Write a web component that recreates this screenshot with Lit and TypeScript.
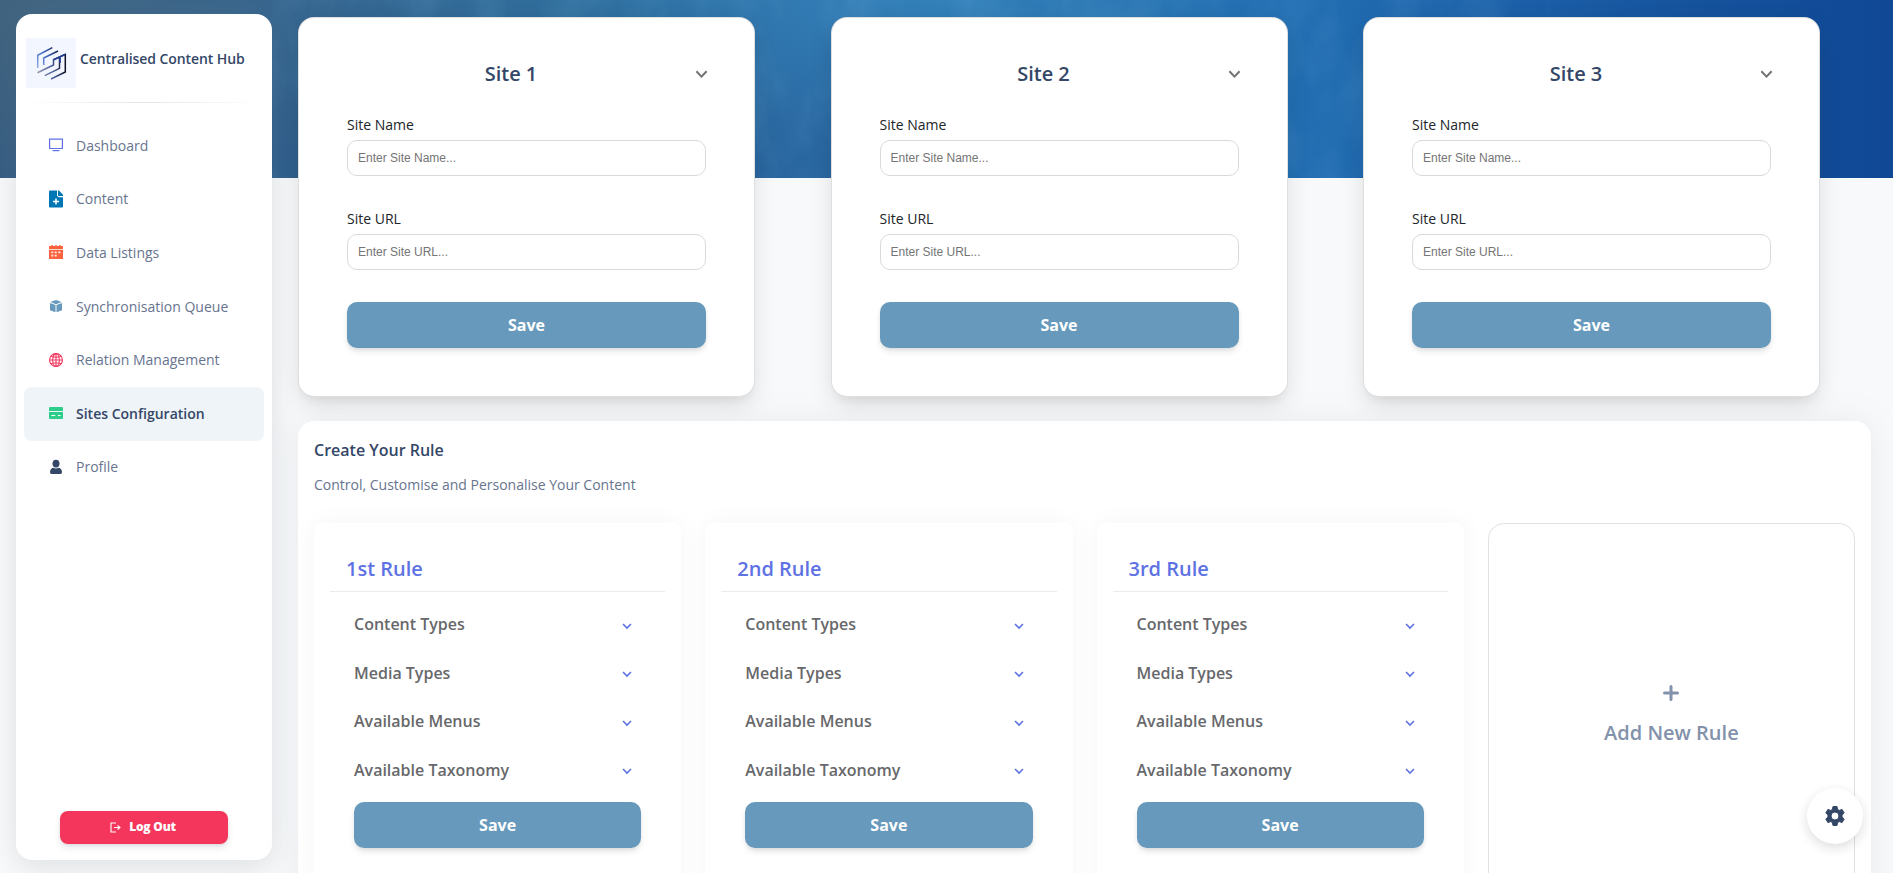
import { LitElement, html, css, svg } from "lit";
import { customElement, property } from "lit/decorators.js";

const chevron = html`<svg class="chev" viewBox="0 0 12 8"><path d="M1.2 1.2 6 6.2 10.8 1.2" fill="none" stroke="currentColor" stroke-width="1.9"/></svg>`;

const saveStyles = css`
  .save {
    display: flex; align-items: center; justify-content: center;
    width: 100%; height: 46px; border: 0; border-radius: 10px; padding: 0;
    background: #6699bb; color: #fff;
    font: 700 16px/24px "Open Sans", sans-serif;
    box-shadow: 0 4px 7px -1px rgba(0, 0, 0, .11), 0 2px 4px -1px rgba(0, 0, 0, .07);
  }
`;

@customElement("site-card")
class SiteCard extends LitElement {
  @property() heading = "";
  static styles = [saveStyles, css`
    :host {
      display: block; box-sizing: border-box; width: 457px; height: 380px;
      padding: 38px 48px 0; background: #fff;
      border: 1px solid rgba(0, 0, 0, .125); border-radius: 16px;
      box-shadow: 0 8px 26px -4px rgba(20, 20, 20, .15), 0 8px 9px -5px rgba(20, 20, 20, .06);
      font-family: "Open Sans", sans-serif;
    }
    .head { display: flex; align-items: center; height: 34px; gap: 20px; margin-right: -2px; }
    .title { flex: 1; text-align: center; font-size: 20px; font-weight: 600; color: #344767; }
    .chev { width: 13px; height: 8.5px; color: #737373; margin-top: 1.5px; }
    .label { display: block; font-size: 14px; line-height: 21px; color: #212529; margin-bottom: 5px; }
    .name { margin-top: 24px; }
    .url { margin-top: 32px; }
    input {
      display: block; box-sizing: border-box; width: 100%; height: 36px; padding: 0 10px;
      border: 1px solid #dadada; border-radius: 10px; background: #fff;
      font: 12px "Liberation Sans", sans-serif;
    }
    input::placeholder { color: #757575; }
    .save { margin-top: 32px; }
  `];
  render() {
    return html`
      <div class="head"><div class="title">${this.heading}</div>${chevron}</div>
      <label class="name label">Site Name</label><input placeholder="Enter Site Name..." />
      <label class="url label">Site URL</label><input placeholder="Enter Site URL..." />
      <button class="save">Save</button>`;
  }
}

@customElement("rule-card")
class RuleCard extends LitElement {
  @property() heading = "";
  static styles = [saveStyles, css`
    :host {
      display: block; box-sizing: border-box; height: 420px; padding: 0 16px;
      border-radius: 8px; background: #fff;
      box-shadow: 0 0 24px rgba(0, 0, 0, .045);
      font-family: "Open Sans", sans-serif;
    }
    .head {
      box-sizing: border-box; height: 69px; padding: 31px 16px 0; border-bottom: 1px solid #e9ecef;
      font-size: 20px; line-height: 30px; font-weight: 600; color: #5e72e4;
    }
    .list { padding: 8px 24px 0; }
    .row {
      display: flex; justify-content: space-between; align-items: center; height: 48.5px;
      padding-right: 9px; font-size: 16px; font-weight: 600; color: #67686b;
    }
    .chev { width: 10px; height: 6.6px; color: #5e72e4; margin-top: 4px; }
    .save { margin-top: 8px; }
  `];
  render() {
    return html`<div class="head">${this.heading}</div>
      <div class="list">
        ${["Content Types", "Media Types", "Available Menus", "Available Taxonomy"].map(
          (t) => html`<div class="row"><span>${t}</span>${chevron}</div>`)}
        <button class="save">Save</button>
      </div>`;
  }
}

const nav = [
  { label: "Dashboard", color: "#5e72e4", icon: svg`<path d="M.6 1.1h12.800v9.400H.6z" fill="none" stroke="currentColor" stroke-width="1.2"/><path d="M3.500 12.600h7" stroke="currentColor" stroke-width="1.2"/>` },
  { label: "Content", color: "#0077b5", icon: svg`<path d="M1-1.500h7v4.300c0 1.500.8 2.400 2.400 2.400H14v9.300a1 1 0 0 1-1 1H1a1 1 0 0 1-1-1V-.5a1 1 0 0 1 1-1z" fill="currentColor"/><path d="M9-1.500h1L14 2.800v1.300h-3.800C9.400 4.100 9 3.700 9 2.900z" fill="currentColor"/><path d="M7 6.500v6M4 9.500h6" stroke="#fff" stroke-width="1.500"/>` },
  { label: "Data Listings", color: "#fb6340", icon: svg`<path d="M0 1h2.500V0H4v1h2.300V0h1.400v1H10V0h1.500v1H14v3.300H0zM0 5h14v9H0z" fill="currentColor"/><path d="M2.300 6.600h2v1.700h-2zM5.700 6.600h2v1.700h-2zM9.200 6.600h2.300v1.700H9.200zM2.300 9.700h2v1.700h-2zM5.700 9.700h2v1.700h-2z" fill="#fff" opacity=".85"/>` },
  { label: "Synchronisation Queue", color: "#6699bb", icon: svg`<path d="M7 1 12.600 3 7 5.200 1.400 3zM1 4l5.500 2v7.300L1 11.200zM13 4 7.500 6v7.300L13 11.200z" fill="currentColor"/>` },
  { label: "Relation Management", color: "#f5365c", icon: svg`<g fill="none" stroke="currentColor" stroke-width="1.1"><circle cx="7" cy="7" r="6.400"/><ellipse cx="7" cy="7" rx="3.300" ry="6.400"/><path d="M.6 7h12.800M7 .6v12.800M2 3.300q5 2 10 0M2 10.700q5-2 10 0"/></g>` },
  { label: "Sites Configuration", color: "#2dce89", icon: svg`<path d="M1 1h12a1 1 0 0 1 1 1v3H0V2a1 1 0 0 1 1-1zM0 6h14v6a1 1 0 0 1-1 1H1a1 1 0 0 1-1-1z" fill="currentColor"/><path d="M2.300 9.500h4M9 9.500h2.500" stroke="#fff" stroke-width="1"/>`, active: true },
  { label: "Profile", color: "#344767", icon: svg`<ellipse cx="7" cy="3.600" rx="3.500" ry="3.900" fill="currentColor"/><path d="M1 12.200C1 9.700 2.400 8 4.300 7.700Q7 9.300 9.700 7.700C11.600 8 13 9.700 13 12.200Q13 14 11.500 14h-9Q1 14 1 12.200z" fill="currentColor"/>` },
];

@customElement("app-root")
class AppRoot extends LitElement {
  static styles = css`
    :host {
      display: block; position: relative; height: 873px; overflow: hidden;
      background: #f8f9fa; font-family: "Open Sans", sans-serif;
    }
    .banner { position: absolute; left: 0; top: 0; width: 100%; height: 178px; }
    .layout { position: relative; display: grid; grid-template-columns: 256px 1573px; column-gap: 26px; padding: 14px 0 0 16px; align-items: start; }
    aside {
      box-sizing: border-box; height: 846px; border-radius: 16px; background: #fff;
      display: flex; flex-direction: column; align-items: center;
      box-shadow: 0 0 32px rgba(136, 152, 170, .15), 0 12px 24px rgba(0, 0, 0, .05);
    }
    .brand { align-self: stretch; display: flex; padding: 24px 10px 0; height: 50px; gap: 4px; }
    .logo { width: 50px; height: 50px; display: block; }
    .name { font-size: 14px; line-height: 21px; font-weight: 600; color: #344767; padding-top: 10px; white-space: nowrap; letter-spacing: -.09px; }
    .rule { width: 240px; height: 1px; margin-top: 14px; background: linear-gradient(90deg, transparent, rgba(0,0,0,.1), transparent); }
    nav { width: 240px; margin-top: 16px; flex: 1; }
    .item { display: flex; align-items: center; box-sizing: border-box; height: 53.600px; padding: 0 0 1px 25px; gap: 13px; font-size: 14px; color: #67748e; border-radius: 8px; }
    .item svg { width: 14px; height: 14px; overflow: visible; }
    .active { background: #eff4f8; color: #344767; font-weight: 600; }
    .logout {
      display: flex; align-items: center; justify-content: center; gap: 8px; width: 168px; height: 33px;
      border: 0; border-radius: 8px; margin-bottom: 16px; padding: 0 2px 2px 0; background: #f5365c; color: #fff;
      font: 800 12px "Open Sans", sans-serif; letter-spacing: -.2px; box-shadow: 0 4px 6px rgba(50,50,93,.1), 0 1px 3px rgba(0,0,0,.08);
    }
    .logout svg { width: 11px; height: 11px; margin-top: 2px; }
    .sites { display: flex; gap: 75.500px; padding-top: 3px; }
    .panel { margin-top: 24px; box-sizing: border-box; height: 560px; padding: 16px; border-radius: 16px; background: #fff; box-shadow: 0 0 32px rgba(136, 152, 170, .15); }
    .panel h6 { margin: 0; font-size: 16px; line-height: 26px; font-weight: 600; color: #344767; }
    .panel p { margin: 11px 0 0; font-size: 14px; line-height: 21px; color: #67748e; }
    .rules { display: grid; grid-template-columns: repeat(4, 367.250px); gap: 24px; margin-top: 28px; }
    .add {
      box-sizing: border-box; border: 1px solid #dee2e6; border-radius: 16px;
      display: flex; flex-direction: column; align-items: center; padding-top: 161px; gap: 17px;
      font-size: 20px; line-height: 30px; font-weight: 600; color: #8392ab;
    }
    .add svg { width: 16px; height: 16px; }
    .gear {
      position: absolute; left: 1807px; top: 788px; width: 56px; height: 56px; border-radius: 50%;
      display: flex; align-items: center; justify-content: center; background: #fff;
      box-shadow: 0 4px 12px rgba(20, 20, 20, .14);
    }
    .gear svg { width: 20px; height: 20px; }
  `;
  render() {
    return html`
      <svg class="banner" viewBox="0 0 1893 178" preserveAspectRatio="none">
        <defs>
          <linearGradient id="sea"><stop offset="0" stop-color="#41647f"/><stop offset=".15" stop-color="#36658e"/><stop offset=".32" stop-color="#2f6f9f"/><stop offset=".43" stop-color="#2d70aa"/><stop offset=".68" stop-color="#226eb2"/><stop offset=".81" stop-color="#1b5ea7"/><stop offset=".9" stop-color="#15529c"/><stop offset="1" stop-color="#104896"/></linearGradient>
          <linearGradient id="depth" x2="0" y2="1"><stop offset="0" stop-color="#20508a" stop-opacity="0"/><stop offset="1" stop-color="#20508a" stop-opacity=".4"/></linearGradient>
          <radialGradient id="glow"><stop offset="0" stop-color="#3a8fc5" stop-opacity=".5"/><stop offset="1" stop-color="#3a8fc5" stop-opacity="0"/></radialGradient>
          <filter id="cloud" x="0" y="0" width="100%" height="100%"><feTurbulence type="fractalNoise" baseFrequency=".018 .01" numOctaves="4" seed="8"/><feColorMatrix values="0 0 0 0 .22  0 0 0 0 .54  0 0 0 0 .78  1 0 0 0 -.38"/></filter>
        </defs>
        <rect width="1893" height="178" fill="url(#sea)"/>
        <rect x="0" width="900" height="178" fill="url(#depth)" opacity=".8"/>
        <ellipse cx="930" cy="0" rx="340" ry="130" fill="url(#glow)"/>
        <rect x="250" width="1300" height="178" filter="url(#cloud)" opacity=".32"/>
      </svg>
      <div class="layout">
        <aside>
          <div class="brand">
            <svg class="logo" viewBox="0 0 50 50">
              <defs>
                <linearGradient id="ink-a" gradientUnits="userSpaceOnUse" x1="11" y1="28" x2="32" y2="10"><stop offset="0" stop-color="#8ea6e6"/><stop offset=".5" stop-color="#3c66c4"/><stop offset="1" stop-color="#141c3c"/></linearGradient>
                <linearGradient id="ink-b" gradientUnits="userSpaceOnUse" x1="12" y1="34" x2="38" y2="28"><stop offset="0" stop-color="#8f97a8"/><stop offset=".55" stop-color="#4a5f9c"/><stop offset="1" stop-color="#0d1226"/></linearGradient>
              </defs>
              <rect width="50" height="50" fill="#f3f6ff"/>
              <g fill="none" stroke-width="1.500">
                <path d="M26.300 9.700 11.700 17.300V30M32 13 17.700 20V27" stroke="url(#ink-a)"/>
                <path d="M11.500 34.700 27.500 27V21.700L39.300 16.300V34L25 41M18.800 37.700 33.500 30.300V20" stroke="url(#ink-b)"/>
                <path d="M27.500 21.700 39 16.500M34 19.500V25" stroke="#243f96" stroke-width="1.800"/>
              </g>
            </svg>
            <div class="name">Centralised Content Hub</div>
          </div>
          <div class="rule"></div>
          <nav>${nav.map((n) => html`<div class="item ${n.active ? "active" : ""}"><svg viewBox="0 0 14 14" color=${n.color}>${n.icon}</svg><span>${n.label}</span></div>`)}</nav>
          <button class="logout"><svg viewBox="0 0 11 11"><path d="M6 1H1v9h5M4 5.500h6M7.500 3.300 10 5.500 7.500 7.700" fill="none" stroke="#fff" stroke-width="1.100"/></svg>Log Out</button>
        </aside>
        <main>
          <div class="sites">${[1, 2, 3].map((n) => html`<site-card heading="Site ${n}"></site-card>`)}</div>
          <section class="panel">
            <h6>Create Your Rule</h6><p>Control, Customise and Personalise Your Content</p>
            <div class="rules">
              ${["1st Rule", "2nd Rule", "3rd Rule"].map((r) => html`<rule-card heading=${r}></rule-card>`)}
              <div class="add"><svg viewBox="0 0 16 16"><path d="M8 1.500v13M1.500 8h13" stroke="#8392ab" stroke-width="3" stroke-linecap="round"/></svg>Add New Rule</div>
            </div>
          </section>
        </main>
      </div>
      <div class="gear"><svg viewBox="0 0 20 20"><path fill-rule="evenodd" fill="#344767" stroke="#344767" stroke-width="1" stroke-linejoin="round" d="M8 .5h4l.6 2.900 1.700 1 2.800-1L19.200 7l-2.200 2v2l2.200 2-2.100 3.600-2.800-1-1.700 1L12 19.500H8l-.6-2.900-1.700-1-2.800 1L.8 13 3 11V9L.8 7l2.100-3.600 2.800 1 1.700-1zM10 6a4 4 0 1 0 0 8 4 4 0 0 0 0-8z"/></svg></div>`;
  }
}
